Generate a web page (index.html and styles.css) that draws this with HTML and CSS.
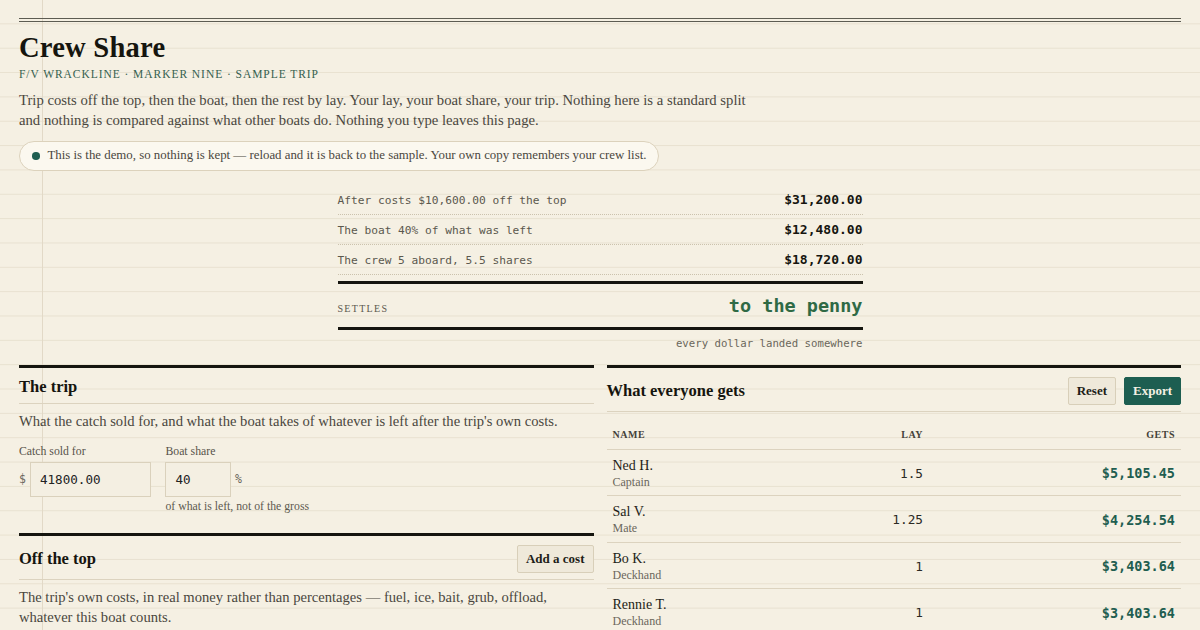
FILE: index.html
```html
<!DOCTYPE html>
<html lang="en">
<head>
<meta charset="utf-8">
<title>Crew Share</title>
<link rel="stylesheet" href="styles.css">
</head>
<body>
<div class="page">
  <header class="masthead">
    <h1 class="title">Crew Share</h1>
    <p class="vessel">F/V WRACKLINE · MARKER NINE · SAMPLE TRIP</p>
    <p class="intro">Trip costs off the top, then the boat, then the rest by lay. Your lay, your boat share, your trip. Nothing here is a standard split and nothing is compared against what other boats do. Nothing you type leaves this page.</p>
    <div class="notice"><span class="dot"></span><span>This is the demo, so nothing is kept — reload and it is back to the sample. Your own copy remembers your crew list.</span></div>
  </header>

  <section class="summary">
    <div class="sum-row"><span class="sum-label">After costs $10,600.00 off the top</span><span class="sum-value">$31,200.00</span></div>
    <div class="sum-row"><span class="sum-label">The boat 40% of what was left</span><span class="sum-value">$12,480.00</span></div>
    <div class="sum-row"><span class="sum-label">The crew 5 aboard, 5.5 shares</span><span class="sum-value">$18,720.00</span></div>
    <div class="settles"><span class="settles-label">SETTLES</span><span class="settles-value">to the penny</span></div>
    <p class="settles-note">every dollar landed somewhere</p>
  </section>

  <div class="columns">
    <div class="col">
      <section class="panel">
        <div class="panel-head"><h2>The trip</h2></div>
        <p class="panel-desc">What the catch sold for, and what the boat takes of whatever is left after the trip's own costs.</p>
        <div class="fields">
          <div class="field">
            <label class="field-label" for="catch">Catch sold for</label>
            <div class="input-row"><span class="affix">$</span><input id="catch" class="input input-wide" value="41800.00"></div>
          </div>
          <div class="field">
            <label class="field-label" for="share">Boat share</label>
            <div class="input-row"><input id="share" class="input input-narrow" value="40"><span class="affix">%</span></div>
            <p class="hint">of what is left, not of the gross</p>
          </div>
        </div>
      </section>
      <section class="panel">
        <div class="panel-head"><h2>Off the top</h2><button class="btn">Add a cost</button></div>
        <p class="panel-desc">The trip's own costs, in real money rather than percentages — fuel, ice, bait, grub, offload, whatever this boat counts.</p>
      </section>
    </div>
    <div class="col">
      <section class="panel">
        <div class="panel-head"><h2>What everyone gets</h2><div class="btns"><button class="btn">Reset</button><button class="btn btn-primary">Export</button></div></div>
        <table class="crew">
          <colgroup><col><col class="col-lay"><col class="col-gets"></colgroup>
          <thead>
            <tr><th>NAME</th><th class="num">LAY</th><th class="num">GETS</th></tr>
          </thead>
          <tbody>
            <tr><td><span class="name">Ned H.</span><span class="role">Captain</span></td><td class="num lay">1.5</td><td class="num gets">$5,105.45</td></tr>
            <tr><td><span class="name">Sal V.</span><span class="role">Mate</span></td><td class="num lay">1.25</td><td class="num gets">$4,254.54</td></tr>
            <tr><td><span class="name">Bo K.</span><span class="role">Deckhand</span></td><td class="num lay">1</td><td class="num gets">$3,403.64</td></tr>
            <tr><td><span class="name">Rennie T.</span><span class="role">Deckhand</span></td><td class="num lay">1</td><td class="num gets">$3,403.64</td></tr>
          </tbody>
        </table>
      </section>
    </div>
  </div>
</div>
</body>
</html>
```
FILE: styles.css
```css
html, body {
  margin: 0;
}
body {
  font-family: "Liberation Serif", "Times New Roman", serif;
  color: #1c1c16;
  background-color: #f5f0e3;
  background-image:
    linear-gradient(to right, transparent 42px, #e2d9c7 42px, #e2d9c7 43px, transparent 43px),
    linear-gradient(to bottom, transparent calc(100% - 1px), #e8e1d0 calc(100% - 1px));
  background-size: 100% 100%, 100% 24.35px;
}
.page {
  padding: 18px 19px 40px;
}
.masthead {
  border-top: 4px double #5d5c52;
}
.title {
  margin: 9px 0 0;
  font-size: 28.6px;
  line-height: 34px;
  font-weight: 700;
  color: #15150f;
  letter-spacing: 0.2px;
}
.vessel {
  margin: 2px 0 0;
  font-size: 11.5px;
  line-height: 14px;
  letter-spacing: 0.95px;
  color: #34604f;
}
.intro {
  margin: 9px 0 0;
  max-width: 735px;
  font-size: 14.7px;
  line-height: 20px;
  color: #4a473e;
}
.notice {
  display: flex;
  align-items: center;
  gap: 8px;
  width: max-content;
  margin-top: 11px;
  padding: 5px 12px;
  border: 1px solid #dcd2bc;
  border-radius: 16px;
  background: #fbf8ef;
  font-size: 12.85px;
  line-height: 17.5px;
  color: #4a473e;
}
.dot {
  flex: none;
  width: 7.5px;
  height: 7.5px;
  border-radius: 50%;
  background: #1f5e50;
}

.summary {
  width: 525px;
  margin: 14px auto 0;
}
.sum-row {
  display: flex;
  justify-content: space-between;
  align-items: baseline;
  height: 22px;
  padding: 7px 0 0;
  line-height: 16px;
  border-bottom: 1px dotted #cbc2ad;
}
.sum-label {
  font-family: "DejaVu Sans Mono", "Liberation Mono", monospace;
  font-size: 11.2px;
  color: #5b584e;
}
.sum-value {
  font-family: "DejaVu Sans Mono", "Liberation Mono", monospace;
  font-size: 13px;
  font-weight: 700;
  color: #15150f;
}
.settles {
  display: flex;
  justify-content: space-between;
  align-items: baseline;
  height: 33px;
  margin-top: 6px;
  padding: 10px 0 0;
  border-top: 3px solid #15150f;
  border-bottom: 3px solid #15150f;
}
.settles-label {
  font-size: 10px;
  line-height: 24px;
  letter-spacing: 1.3px;
  color: #5b584e;
}
.settles-value {
  font-family: "DejaVu Sans Mono", "Liberation Mono", monospace;
  font-size: 18.5px;
  line-height: 24px;
  font-weight: 700;
  color: #2f6a45;
}
.settles-note {
  margin: 6px 0 0;
  text-align: right;
  font-family: "DejaVu Sans Mono", "Liberation Mono", monospace;
  font-size: 10.7px;
  line-height: 16px;
  color: #6a665a;
}

.columns {
  display: grid;
  grid-template-columns: 1fr 1fr;
  column-gap: 13px;
  align-items: start;
  margin-top: 13px;
}
.panel {
  border-top: 3px solid #15150f;
}
.panel + .panel {
  margin-top: 19px;
}
.panel-head {
  display: flex;
  align-items: center;
  justify-content: space-between;
  padding: 9px 0 6px;
  border-bottom: 1px solid #dcd3bf;
}
.panel-head h2 {
  margin: 0;
  font-size: 16.5px;
  line-height: 20px;
  font-weight: 700;
  color: #15150f;
}
.btns {
  display: flex;
  gap: 8px;
}
.btn {
  height: 28px;
  padding: 0 8px;
  font-family: "Liberation Serif", "Times New Roman", serif;
  font-size: 13px;
  font-weight: 700;
  color: #1e1e18;
  background: #efe9da;
  border: 1px solid #d8cfb9;
  border-radius: 2px;
}
.btn-primary {
  color: #f6f1e4;
  background: #1d5e51;
  border-color: #1d5e51;
}
.panel-desc {
  margin: 8px 0 0;
  font-size: 14.6px;
  line-height: 19.5px;
  color: #4a473e;
}
.fields {
  display: flex;
  gap: 14px;
  margin-top: 12.5px;
}
.field-label {
  display: block;
  margin-bottom: 3.5px;
  font-size: 11.75px;
  line-height: 15px;
  color: #57534a;
}
.input-row {
  display: flex;
  align-items: center;
  gap: 4px;
}
.input {
  box-sizing: border-box;
  height: 34.5px;
  margin: 0;
  padding: 0 9px;
  font-family: "DejaVu Sans Mono", "Liberation Mono", monospace;
  font-size: 12.6px;
  color: #222;
  background: #f4efe2;
  border: 1px solid #dad1bc;
  border-radius: 0;
}
.input-wide {
  width: 121.5px;
}
.input-narrow {
  width: 65.5px;
}
.affix {
  font-family: "DejaVu Sans Mono", "Liberation Mono", monospace;
  font-size: 11.5px;
  color: #6b675c;
}
.hint {
  margin: 2.5px 0 0;
  font-size: 11.75px;
  line-height: 15px;
  color: #5d594f;
}

.crew {
  width: 100%;
  margin-top: 10px;
  border-collapse: collapse;
}
.col-lay {
  width: 112px;
}
.col-gets {
  width: 252px;
}
.crew th {
  padding: 6px 6px 7px;
  font-size: 10px;
  line-height: 14px;
  font-weight: 700;
  letter-spacing: 0.5px;
  text-align: left;
  color: #44423a;
  border-bottom: 1px solid #dcd3bf;
}
.crew td {
  padding: 7px 6px 5.5px;
  vertical-align: middle;
  border-bottom: 1px solid #dcd3bf;
}
.crew .num {
  text-align: right;
}
.name {
  display: block;
  font-size: 14px;
  line-height: 17px;
  color: #1e1e18;
}
.role {
  display: block;
  font-size: 12px;
  line-height: 16px;
  color: #6b675c;
}
.lay {
  font-family: "DejaVu Sans Mono", "Liberation Mono", monospace;
  font-size: 12.75px;
  color: #2a2a24;
}
.gets {
  font-family: "DejaVu Sans Mono", "Liberation Mono", monospace;
  font-size: 13.5px;
  font-weight: 700;
  color: #1f5e50;
}
```
